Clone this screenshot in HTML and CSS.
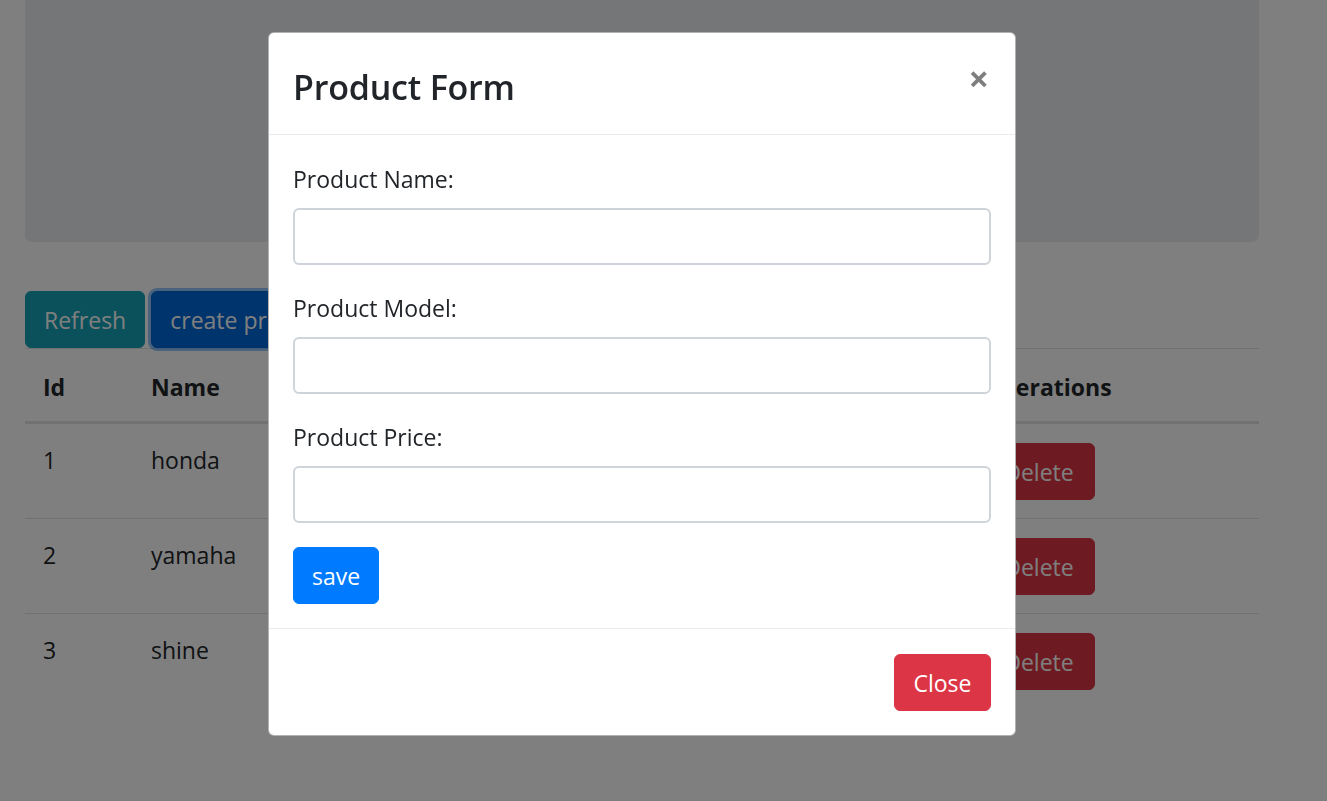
FILE: index.html
```html
<!DOCTYPE html>
<html>
<head>
<meta charset="utf-8">
<link rel="stylesheet" href="styles.css">
</head>
<body>
<div class="page">
  <div class="jumbotron"></div>
  <div class="toolbar">
    <button class="btn btn-info">Refresh</button>
    <button class="btn btn-primary focus">create product</button>
  </div>
  <table class="table">
    <colgroup>
      <col class="c-id"><col class="c-name"><col class="c-model"><col class="c-price"><col class="c-ops">
    </colgroup>
    <thead>
      <tr><th>Id</th><th>Name</th><th>Model</th><th>Price</th><th>Operations</th></tr>
    </thead>
    <tbody>
      <tr><td>1</td><td>honda</td><td>cbr</td><td>100</td><td><button class="btn btn-danger">Delete</button></td></tr>
      <tr><td>2</td><td>yamaha</td><td>fz</td><td>200</td><td><button class="btn btn-danger">Delete</button></td></tr>
      <tr><td>3</td><td>shine</td><td>sp</td><td>300</td><td><button class="btn btn-danger">Delete</button></td></tr>
    </tbody>
  </table>
</div>
<div class="backdrop"></div>
<div class="modal">
  <div class="modal-header">
    <h4 class="modal-title">Product Form</h4>
    <button class="close">×</button>
  </div>
  <div class="modal-body">
    <div class="form-group">
      <label class="label">Product Name:</label>
      <input class="form-control" type="text">
    </div>
    <div class="form-group">
      <label class="label">Product Model:</label>
      <input class="form-control" type="text">
    </div>
    <div class="form-group">
      <label class="label">Product Price:</label>
      <input class="form-control" type="text">
    </div>
    <button class="btn btn-primary">save</button>
  </div>
  <div class="modal-footer">
    <button class="btn btn-danger">Close</button>
  </div>
</div>
</body>
</html>
```
FILE: styles.css
```css
* { box-sizing: border-box; }
html, body {
  margin: 0;
  padding: 0;
  background: #fff;
  font-family: "Segoe UI", "Open Sans", "Noto Sans", "Liberation Sans", sans-serif;
  font-size: 23px;
  line-height: 36px;
  color: #212529;
  overflow: hidden;
  height: 801px;
}
.page {
  width: 1234px;
  margin-left: 25px;
}
.jumbotron {
  height: 242px;
  background: #e9ecef;
  border-radius: 0 0 7px 7px;
  margin-bottom: 49px;
}
.toolbar {
  display: flex;
  gap: 6px;
}
.btn {
  font-family: inherit;
  font-size: 23px;
  line-height: 36px;
  height: 57px;
  padding: 9px 18px;
  border: 1.5px solid transparent;
  border-radius: 6px;
  color: #fff;
  cursor: pointer;
}
.btn-info { background: #17a2b8; border-color: #17a2b8; }
.btn-primary { background: #007bff; border-color: #007bff; }
.btn-primary.focus { background: #0069d9; border-color: #0062cc; box-shadow: 0 0 0 3px rgba(38,143,255,.5); }
.btn-danger { background: #dc3545; border-color: #dc3545; }
.table {
  width: 1234px;
  border-collapse: collapse;
  table-layout: fixed;
}
.c-id { width: 108px; }
.c-name { width: 300px; }
.c-model { width: 270px; }
.c-price { width: 262px; }
.c-ops { width: 294px; }
.table th, .table td {
  text-align: left;
  padding: 18px;
  border-top: 1px solid #dee2e6;
  vertical-align: top;
}
.table th {
  font-weight: 700;
  padding-top: 20px;
  padding-bottom: 16px;
  border-bottom: 3px solid #dee2e6;
}
.table td { height: 94px; }
.table td .btn { display: block; margin-top: 1px; width: 112px; }
.backdrop {
  position: fixed;
  inset: 0;
  background: rgba(0,0,0,.5);
}
.modal {
  position: absolute;
  top: 32px;
  left: 268px;
  width: 748px;
  background: #fff;
  border: 1px solid rgba(0,0,0,.3);
  border-radius: 6px;
  display: flex;
  flex-direction: column;
}
.modal-header {
  display: flex;
  align-items: flex-start;
  justify-content: space-between;
  padding: 24px;
  height: 102px;
  border-bottom: 1.5px solid #e9ecef;
}
.modal-title {
  margin: 0;
  font-size: 34px;
  font-weight: 600;
  line-height: 60px;
  letter-spacing: -0.2px;
}
.close {
  background: none;
  border: 0;
  padding: 0;
  margin: 4px 2px 0 0;
  font-family: inherit;
  font-size: 36px;
  font-weight: 700;
  line-height: 1;
  color: #000;
  opacity: .5;
}
.modal-body {
  padding: 25px 24px 24px;
}
.form-group { margin-bottom: 24px; display: flex; flex-direction: column; }
.label { display: block; margin-bottom: 11px; padding-top: 1px; line-height: 36px; }
.form-control {
  display: block;
  width: 100%;
  height: 57px;
  padding: 9px 18px;
  font-size: 23px;
  font-family: inherit;
  border: 2px solid #ced4da;
  border-radius: 6px;
  background: #fff;
}
.modal-footer {
  display: flex;
  justify-content: flex-end;
  padding: 19px 18px 18px;
  border-top: 1.5px solid #e9ecef;
}
.modal-footer .btn { margin: 6px; width: 97px; }
```
